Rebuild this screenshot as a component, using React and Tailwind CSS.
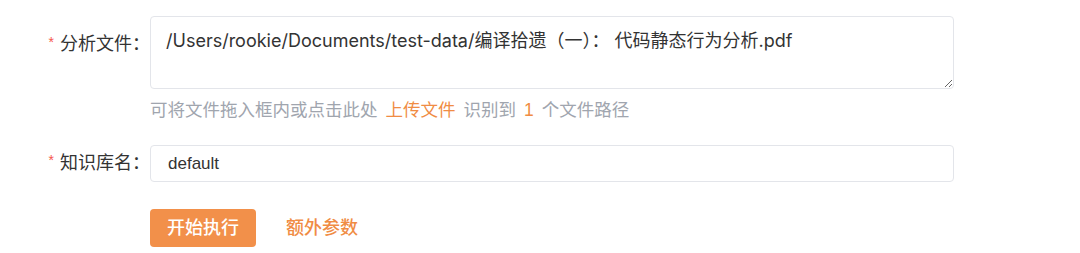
export default function App() {
  const font = { fontFamily: '"Liberation Sans", "Noto Sans CJK SC", sans-serif' };
  const pathFont = { fontFamily: 'Inter, "Noto Sans CJK SC", sans-serif' };
  return (
    <div className="w-[1080px] h-[253px] bg-white pt-[16px]" style={font}>
      <div className="flex">
        <div className="w-[150px] flex justify-end items-start pt-[15px] text-[18px] leading-[26px] text-[#333333]">
          <span className="text-[#f5564e] text-[14px] mr-[6px] leading-[22px]">*</span>
          <span>分析文件：</span>
        </div>
        <div className="flex flex-col">
          <textarea
            readOnly
            defaultValue="/Users/rookie/Documents/test-data/编译拾遗（一）： 代码静态行为分析.pdf"
            className="w-[804px] h-[73px] border border-[#e3e5ea] rounded-[4px] pl-[15px] pr-[12px] pt-[11px] text-[18px] leading-[26px] text-[#333333] outline-none bg-white resize-y"
            style={pathFont}
          />
          <div className="mt-[9px] flex items-center text-[17.5px] leading-[24px] text-[#a0a5ae] whitespace-nowrap">
            <span>可将文件拖入框内或点击此处</span>
            <span className="ml-[8px] text-[#f08c44]">上传文件</span>
            <span className="ml-[8px]">识别到</span>
            <span className="ml-[8px] text-[#f08c44]">1</span>
            <span className="ml-[8px]">个文件路径</span>
          </div>
        </div>
      </div>
      <div className="flex mt-[23px]">
        <div className="w-[150px] flex justify-end items-center h-[37px] text-[18px] text-[#333333]">
          <span className="text-[#f5564e] text-[14px] mr-[6px] -mt-[6px]">*</span>
          <span>知识库名：</span>
        </div>
        <div className="w-[804px] h-[37px] border border-[#e3e5ea] rounded-[4px] pl-[17px] flex items-center text-[17px] text-[#333333]">
          default
        </div>
      </div>
      <div className="flex items-center ml-[150px] mt-[27px] gap-[30px]">
        <div className="w-[106px] h-[38px] rounded-[4px] bg-[#f2904a] text-white text-[18px] font-medium flex items-center justify-center">
          开始执行
        </div>
        <div className="text-[#f08c44] text-[18px] font-medium">额外参数</div>
      </div>
    </div>
  );
}
